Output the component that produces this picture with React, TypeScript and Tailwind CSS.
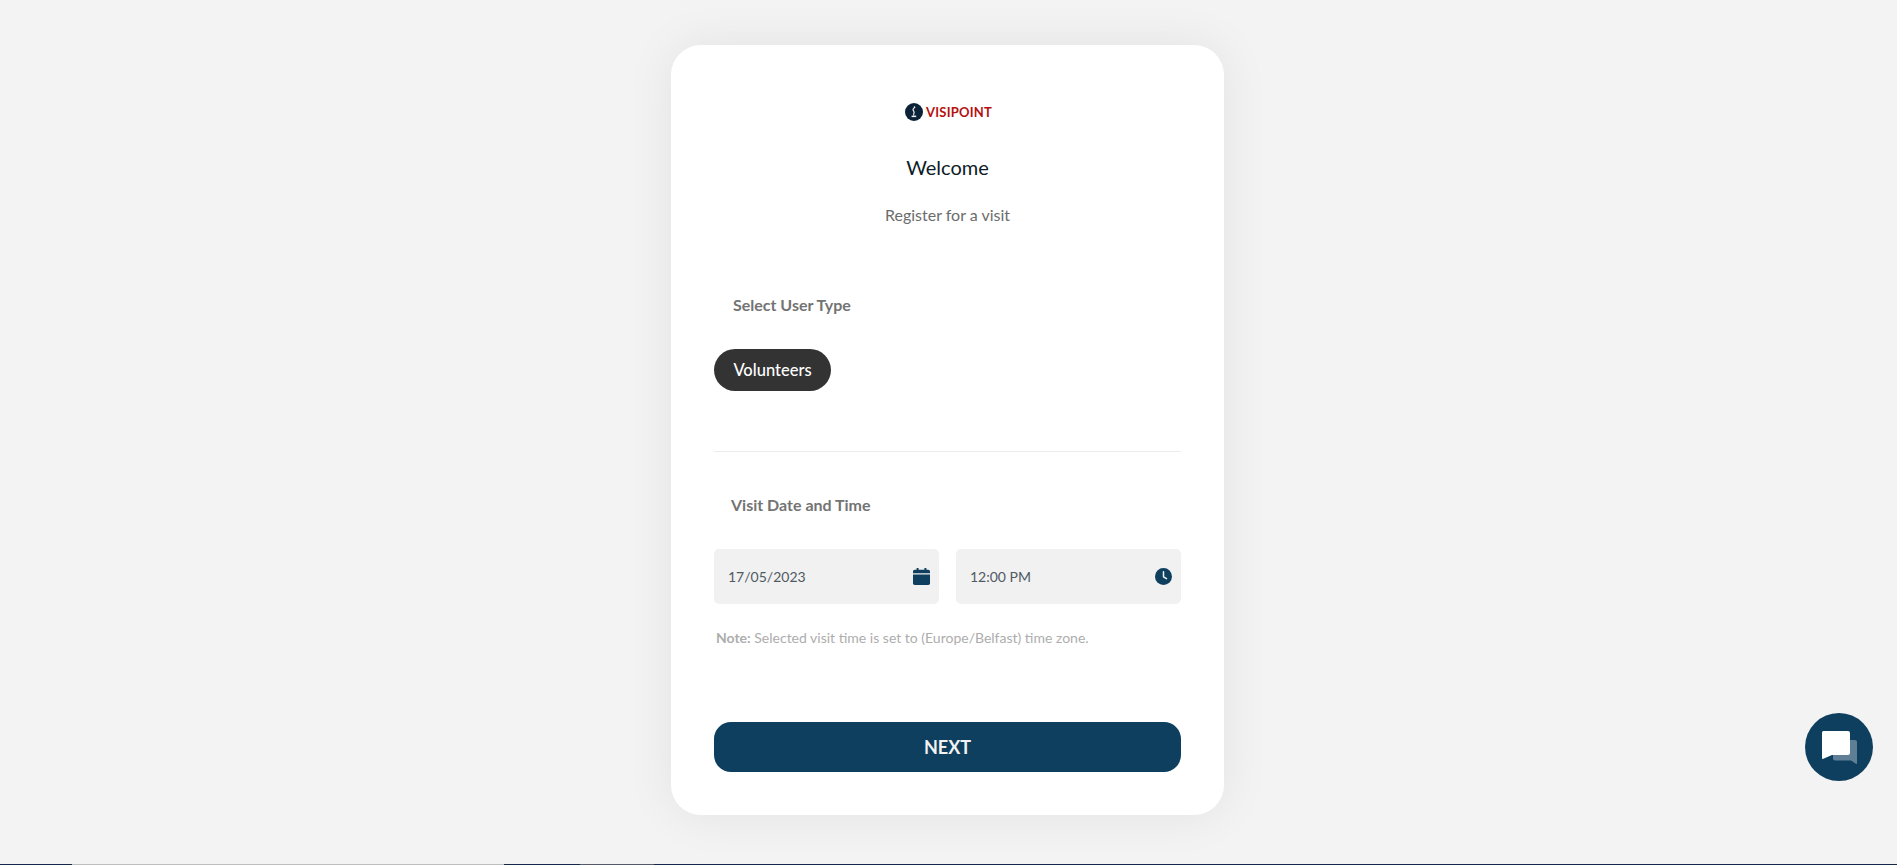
function LogoMark() {
  return (
    <svg viewBox="0 0 18 18" className="w-[18px] h-[18px] shrink-0">
      <circle cx="9" cy="9" r="9" fill="#0c2238" />
      <path d="M9.4 3.2c1 .1 1.2.9.7 1.6-.5.6-1.500 1.100-1.500 2 0 .8 1.100 1.300 1.100 2.400 0 1-.7 1.700-.5 3.200H8.200c-.2-1.400.3-2.300.3-3.100 0-.9-1.100-1.400-1.100-2.500 0-1.200 1.200-1.700 1.500-2.600.1-.3 0-.4-.3-.5z" fill="#f2f2f2" />
      <rect x="6.600" y="12.600" width="4.600" height="1.500" fill="#f2f2f2" />
    </svg>
  );
}

function CalendarIcon() {
  return (
    <svg viewBox="0 0 17 17" className="w-[17px] h-[17px] shrink-0" fill="#0f3f5e">
      <rect x="3.6" y="0" width="2" height="3.4" rx="0.6" />
      <rect x="11.4" y="0" width="2" height="3.4" rx="0.6" />
      <path d="M0 3.4a1.7 1.7 0 0 1 1.7-1.7h13.6A1.7 1.7 0 0 1 17 3.4v1.9H0z" />
      <path d="M0 6.4h17v8.9a1.7 1.7 0 0 1-1.7 1.7H1.7A1.7 1.7 0 0 1 0 15.3z" />
    </svg>
  );
}

function ClockIcon() {
  return (
    <svg viewBox="0 0 17 17" className="w-[17px] h-[17px] shrink-0">
      <circle cx="8.5" cy="8.5" r="8.5" fill="#0f3f5e" />
      <path d="M8.5 3.8v5l3 1.9" fill="none" stroke="#f1f1f1" strokeWidth="1.5" strokeLinecap="round" strokeLinejoin="round" />
    </svg>
  );
}

function ChatIcon() {
  return (
    <svg viewBox="0 0 35 33" className="w-[35px] h-[33px]">
      <path d="M11 9h22a2 2 0 0 1 2 2v21.2a.7.7 0 0 1-1.2.5L29 29.500H13a2 2 0 0 1-2-2z" fill="#5e7f95" />
      <path d="M1.500 0H26a2 2 0 0 1 2 2v20a2 2 0 0 1-2 2H10l-8.600 3.800A1 1 0 0 1 0 26.900V1.500A1.500 1.500 0 0 1 1.500 0z" fill="#ffffff" />
    </svg>
  );
}

export default function App() {
  return (
    <div className="relative h-[865px] overflow-hidden flex flex-col bg-[#f3f3f3] font-['Lato','Open_Sans',sans-serif]">
      <div className="flex-1 flex justify-center pt-[45px] pr-[2px]">
        <div className="w-[553px] h-[770px] bg-white rounded-[30px] shadow-[0_0_50px_rgba(0,0,0,0.07)] px-[43px] flex flex-col">
          <div className="flex items-center justify-center gap-[3px] mt-[58px] h-[18px] ml-[2px]">
            <LogoMark />
            <span className="text-[13px] font-bold tracking-[0.2px] leading-none text-[#b5110f]">VISIPOINT</span>
          </div>
          <h1 className="text-center text-[20px] leading-[24px] text-[#0d1b26] mt-[34px]">Welcome</h1>
          <p className="text-center text-[16px] leading-[20px] text-[#6c6c6c] mt-[26px]">Register for a visit</p>

          <h2 className="text-[16px] leading-[20px] font-bold text-[#737373] mt-[70px] pl-[19px]">Select User Type</h2>
          <div className="mt-[34px]">
            <button className="w-[117px] h-[42px] rounded-full bg-[#333333] text-white text-[16.5px] font-medium">Volunteers</button>
          </div>
          <div className="h-px bg-[#ececec] mt-[60px]" />

          <h2 className="text-[16px] leading-[20px] font-bold text-[#737373] mt-[43px] pl-[17px]">Visit Date and Time</h2>
          <div className="grid grid-cols-2 gap-[17px] mt-[34px]">
            <div className="h-[55px] rounded-[5px] bg-[#f1f1f1] flex items-center justify-between pl-[14px] pr-[9px]">
              <span className="text-[14px] text-[#4f5a63]">17/05/2023</span>
              <CalendarIcon />
            </div>
            <div className="h-[55px] rounded-[5px] bg-[#f1f1f1] flex items-center justify-between pl-[14px] pr-[9px]">
              <span className="text-[14px] text-[#4f5a63]">12:00 PM</span>
              <ClockIcon />
            </div>
          </div>
          <p className="text-[14px] leading-[18px] text-[#adadad] mt-[25px] pl-[2px]">
            <span className="font-bold">Note:</span> Selected visit time is set to (Europe/Belfast) time zone.
          </p>

          <button className="w-full h-[50px] rounded-[17px] bg-[#0f3f5e] text-[#f2f2f2] text-[18px] font-bold mt-[75px]">NEXT</button>
        </div>
      </div>

      <div className="h-px flex shrink-0">
        <div className="w-[72px] bg-[#14284a]" />
        <div className="w-[432px] bg-[#bdbdbd]" />
        <div className="w-[76px] bg-[#14284a]" />
        <div className="w-[74px] bg-[#55596a]" />
        <div className="flex-1 bg-[#14284a]" />
      </div>

      <button className="absolute left-[1805px] top-[713px] w-[68px] h-[68px] rounded-full bg-[#0f3f5e] flex items-center justify-center">
        <ChatIcon />
      </button>
    </div>
  );
}
